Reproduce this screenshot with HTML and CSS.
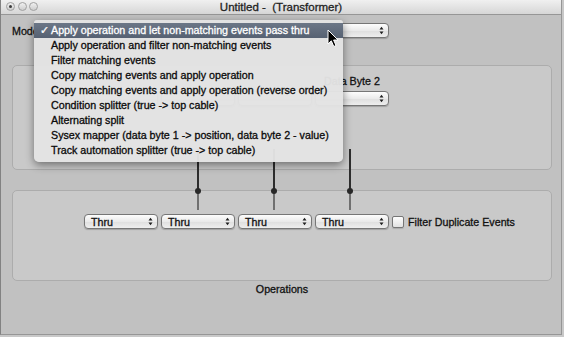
FILE: index.html
```html
<!DOCTYPE html>
<html lang="en">
<head>
    <meta charset="UTF-8">
    <title>Untitled - (Transformer)</title>
    <link rel="stylesheet" href="styles.css">
</head>
<body>
    <div class="window">
        <!-- title bar -->
        <div class="titlebar">
            <div class="lights">
                <span class="light dirty"></span>
                <span class="light"></span>
                <span class="light"></span>
            </div>
            <div class="title">Untitled -&nbsp; (Transformer)</div>
            <div></div>
        </div>

        <div class="content">
            <div class="mode-row">
                <span class="mode-label">Mode:</span>
                <div class="popup mode-popup">
                    <span></span>
                    <svg class="arrows" width="5" height="9" viewBox="0 0 5 9"><path d="M0.5 3.5 L2.5 0.8 L4.5 3.5 Z M0.5 5.5 L2.5 8.2 L4.5 5.5 Z"/></svg>
                </div>
            </div>

            <!-- the first three columns sit under the open menu -->
            <div class="group conditions">
                <div class="cols">
                    <div class="col">
                        <span class="col-label"></span>
                        <div class="popup"></div>
                    </div>
                    <div class="col">
                        <span class="col-label"></span>
                        <div class="popup"></div>
                    </div>
                    <div class="col">
                        <span class="col-label"></span>
                        <div class="popup"></div>
                    </div>
                    <div class="col">
                        <span class="col-label">Data Byte 2</span>
                        <div class="popup"><span></span><svg class="arrows" width="5" height="9" viewBox="0 0 5 9"><path d="M0.5 3.5 L2.5 0.8 L4.5 3.5 Z M0.5 5.5 L2.5 8.2 L4.5 5.5 Z"/></svg></div>
                    </div>
                </div>
            </div>

            <div class="group operations">
                <div class="ops-row">
                    <div class="popup"><span>Thru</span><svg class="arrows" width="5" height="9" viewBox="0 0 5 9"><path d="M0.5 3.5 L2.5 0.8 L4.5 3.5 Z M0.5 5.5 L2.5 8.2 L4.5 5.5 Z"/></svg></div>
                    <div class="popup"><span>Thru</span><svg class="arrows" width="5" height="9" viewBox="0 0 5 9"><path d="M0.5 3.5 L2.5 0.8 L4.5 3.5 Z M0.5 5.5 L2.5 8.2 L4.5 5.5 Z"/></svg></div>
                    <div class="popup"><span>Thru</span><svg class="arrows" width="5" height="9" viewBox="0 0 5 9"><path d="M0.5 3.5 L2.5 0.8 L4.5 3.5 Z M0.5 5.5 L2.5 8.2 L4.5 5.5 Z"/></svg></div>
                    <div class="popup"><span>Thru</span><svg class="arrows" width="5" height="9" viewBox="0 0 5 9"><path d="M0.5 3.5 L2.5 0.8 L4.5 3.5 Z M0.5 5.5 L2.5 8.2 L4.5 5.5 Z"/></svg></div>
                    <span class="checkbox"></span>
                    <span class="check-label">Filter Duplicate Events</span>
                </div>
            </div>
            <div class="caption">Operations</div>
        </div>

        <!-- cables between the two groups -->
        <div class="cable c1"><span class="knot"></span></div>
        <div class="cable c2"><span class="knot"></span></div>
        <div class="cable c3"><span class="knot"></span></div>

        <!-- open popup menu -->
        <ul class="menu">
            <li class="selected"><span class="tick">✓</span>Apply operation and let non-matching events pass thru</li>
            <li>Apply operation and filter non-matching events</li>
            <li>Filter matching events</li>
            <li>Copy matching events and apply operation</li>
            <li>Copy matching events and apply operation (reverse order)</li>
            <li>Condition splitter (true -&gt; top cable)</li>
            <li>Alternating split</li>
            <li>Sysex mapper (data byte 1 -&gt; position, data byte 2 - value)</li>
            <li>Track automation splitter (true -&gt; top cable)</li>
        </ul>

        <svg class="cursor" width="13" height="19" viewBox="0 0 13 19">
            <path d="M1 1 V15 L4.3 11.8 L6.8 17.5 L9 16.5 L6.6 11 H11 Z" fill="#000" stroke="#fff" stroke-width="1" stroke-linejoin="round"/>
        </svg>
    </div>
</body>
</html>
```

FILE: styles.css
```css
*{
    margin: 0;
    padding: 0;
    box-sizing: border-box;
}
body{
    width: 564px;
    height: 337px;
    background-color: rgb(200, 200, 200);
    font-family: "Liberation Sans", Arial, sans-serif;
    font-size: 10.7px;
    color: rgb(17, 17, 17);
    -webkit-text-stroke: 0.3px currentColor;
}
.window{
    position: relative;
    width: 562px;
    height: 335px;
    background-color: rgb(193, 193, 193);
    border-left: 1px solid rgb(130, 130, 130);
    border-right: 1px solid rgb(150, 150, 150);
    border-bottom: 1px solid rgb(150, 150, 150);
    overflow: hidden;
}
.titlebar{
    height: 15px;
    display: grid;
    grid-template-columns: 1fr auto 1fr;
    align-items: center;
    background: linear-gradient(rgb(240, 240, 240), rgb(214, 214, 214));
    border-bottom: 1px solid rgb(150, 150, 150);
}
.lights{
    display: flex;
    gap: 2.5px;
    padding-left: 5px;
    padding-bottom: 2px;
}
.light{
    position: relative;
    width: 9px;
    height: 9px;
    border-radius: 50%;
    background: linear-gradient(rgb(240, 240, 240), rgb(205, 205, 205));
    border: 1px solid rgb(160, 160, 160);
}
.light.dirty::after{
    content: '';
    position: absolute;
    left: 2px;
    top: 2px;
    width: 3px;
    height: 3px;
    border-radius: 50%;
    background-color: rgb(60, 60, 60);
}
.title{
    font-size: 11.5px;
    color: rgb(34, 34, 34);
    padding-bottom: 1px;
}
.content{
    padding: 8px 9px 0 11px;
}
.mode-row{
    display: flex;
    align-items: center;
    height: 15px;
}
.mode-label{
    width: 33px;
}
.popup{
    display: flex;
    align-items: center;
    justify-content: space-between;
    width: 74px;
    height: 15px;
    padding: 0 4px 0 6px;
    border: 1px solid rgb(118, 118, 118);
    border-radius: 4px;
    background: linear-gradient(rgb(253, 253, 253), rgb(234, 234, 234) 50%, rgb(222, 222, 222) 51%, rgb(238, 238, 238));
    box-shadow: 0 1px 1px rgba(0, 0, 0, 0.2);
    color: rgb(17, 17, 17);
    white-space: nowrap;
    overflow: hidden;
}
.mode-popup{
    width: 344px;
}
.arrows{
    flex-shrink: 0;
    fill: rgb(30, 30, 30);
}
.group{
    border: 1px solid rgb(172, 172, 172);
    border-radius: 5px;
    background-color: rgb(201, 201, 201);
    padding-left: 71px;
}
.conditions{
    margin-top: 27px;
    height: 105px;
    padding-top: 9px;
}
.cols{
    display: flex;
    gap: 3px;
}
.col{
    display: flex;
    flex-direction: column;
    align-items: center;
    gap: 3px;
}
.col-label{
    height: 13px;
    line-height: 13px;
}
.operations{
    margin-top: 20px;
    height: 91px;
    padding-top: 23px;
}
.ops-row{
    display: flex;
    align-items: center;
    gap: 3px;
}
.checkbox{
    width: 12px;
    height: 12px;
    margin-top: 1px;
    border: 1px solid rgb(118, 118, 118);
    border-radius: 2px;
    background: linear-gradient(rgb(253, 253, 253), rgb(226, 226, 226));
    box-shadow: 0 1px 1px rgba(0, 0, 0, 0.15);
}
.check-label{
    margin-left: 1px;
}
.caption{
    margin-top: 2px;
    text-align: center;
    line-height: 12px;
}
.cable{
    position: absolute;
    top: 149px;
    width: 2px;
    height: 61px;
    background: linear-gradient(rgb(45, 45, 45) 41px, rgb(112, 112, 112) 41px);
}
.c1{ left: 196px; }
.c2{ left: 272px; }
.c3{ left: 348px; }
.knot{
    position: absolute;
    left: -2px;
    top: 39px;
    width: 6px;
    height: 6px;
    border-radius: 50%;
    background-color: rgb(40, 40, 40);
}
.menu{
    position: absolute;
    left: 33px;
    top: 20px;
    width: 309px;
    height: 142px;
    padding: 3px 0 4px;
    list-style: none;
    background-color: rgba(227, 227, 227, 0.97);
    border-radius: 3px 3px 5px 5px;
    box-shadow: 0 3px 9px rgba(0, 0, 0, 0.45);
}
.menu li{
    position: relative;
    height: 15px;
    line-height: 15px;
    padding-left: 17px;
    white-space: nowrap;
    color: rgb(10, 10, 10);
}
.menu li.selected{
    background: linear-gradient(rgb(108, 119, 135), rgb(86, 97, 114));
    color: rgb(255, 255, 255);
}
.tick{
    position: absolute;
    left: 6px;
}
.cursor{
    position: absolute;
    left: 326px;
    top: 29px;
}
```
